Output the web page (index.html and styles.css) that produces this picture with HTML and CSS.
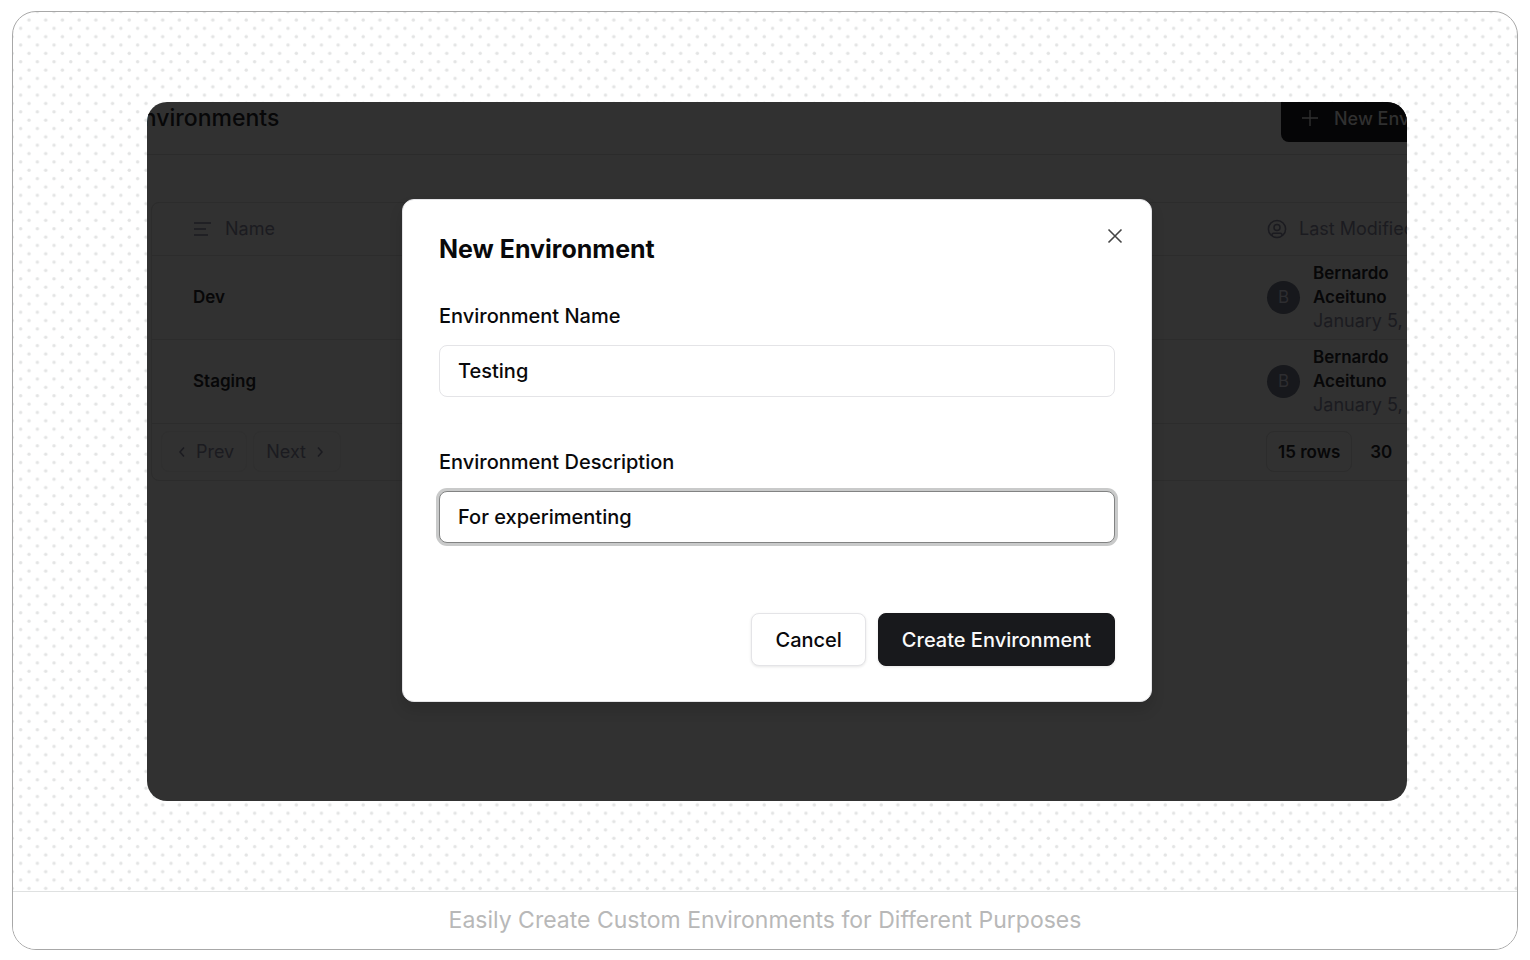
FILE: index.html
```html
<!DOCTYPE html>
<html lang="en">
<head>
<meta charset="utf-8">
<title>Environments</title>
<link rel="stylesheet" href="styles.css">
</head>
<body>
<figure class="frame">
  <div class="stage">
    <svg class="dots" aria-hidden="true">
      <defs>
        <pattern id="dot-grid" x="11.8" y="3.8" width="16.71" height="16.7" patternUnits="userSpaceOnUse">
          <circle cx="4.2" cy="4.2" r="1.7" fill="#e3e4e4"/>
          <circle cx="12.55" cy="12.55" r="1.7" fill="#e3e4e4"/>
        </pattern>
      </defs>
      <rect width="100%" height="100%" fill="url(#dot-grid)"/>
    </svg>
    <div class="shot">
      <main class="board">
        <header class="board-header">
          <h1 class="board-title">Environments</h1>
          <button class="new-button" type="button">
            <svg width="18" height="18" viewBox="0 0 18 18" fill="none" stroke="currentColor" stroke-width="1.4" aria-hidden="true"><path d="M9 1v16M1 9h16"/></svg>
            New Environment
          </button>
        </header>
        <section class="panel">
          <table class="table">
            <thead>
              <tr>
                <th class="col-name" scope="col"><span class="th-label">
                  <svg width="20" height="20" viewBox="0 0 20 20" fill="none" stroke="currentColor" stroke-width="1.6" aria-hidden="true"><path d="M1 4h17M1 10h12M1 16h14"/></svg>Name</span></th>
                <th class="col-user" scope="col"><span class="th-label">
                  <svg width="20" height="20" viewBox="0 0 20 20" fill="none" stroke="currentColor" stroke-width="1.5" aria-hidden="true"><circle cx="10" cy="10" r="8.6"/><circle cx="10" cy="8.5" r="3"/><path d="M5 17v-1.2a1.6 1.6 0 0 1 1.6-1.6h6.800a1.6 1.6 0 0 1 1.6 1.6V17"/></svg>Last Modified</span></th>
              </tr>
            </thead>
            <tbody>
              <tr>
                <td class="col-name">Dev</td>
                <td class="col-user"><div class="user"><span class="avatar">B</span><div class="who">Bernardo<br>Aceituno<br><span class="date">January 5, 2024</span></div></div></td>
              </tr>
              <tr>
                <td class="col-name">Staging</td>
                <td class="col-user"><div class="user"><span class="avatar">B</span><div class="who">Bernardo<br>Aceituno<br><span class="date">January 5, 2024</span></div></div></td>
              </tr>
            </tbody>
          </table>
          <div class="pager">
            <div class="pager-group">
              <button class="page-button" type="button"><svg width="8" height="12" viewBox="0 0 8 12" fill="none" stroke="currentColor" stroke-width="1.5" aria-hidden="true"><path d="M6 1.500 2 6l4 4.500"/></svg>Prev</button>
              <button class="page-button" type="button">Next<svg width="8" height="12" viewBox="0 0 8 12" fill="none" stroke="currentColor" stroke-width="1.5" aria-hidden="true"><path d="M2 1.500 6 6l-4 4.500"/></svg></button>
            </div>
            <div class="rows-group">
              <button class="rows-button rows-current" type="button">15 rows</button>
              <button class="rows-button" type="button">30</button>
            </div>
          </div>
        </section>
      </main>
      <div class="overlay">
        <form class="modal" role="dialog" aria-labelledby="modal-title">
          <h2 class="modal-title" id="modal-title">New Environment</h2>
          <button class="close" type="button" aria-label="Close"><svg width="16" height="16" viewBox="0 0 16 16" fill="none" stroke="currentColor" stroke-width="1.6" aria-hidden="true"><path d="m1.500 1.500 13 13m0-13-13 13"/></svg></button>
          <div class="field">
            <label for="env-name">Environment Name</label>
            <input class="input" id="env-name" type="text" value="Testing">
          </div>
          <div class="field">
            <label for="env-description">Environment Description</label>
            <input class="input input-active" id="env-description" type="text" value="For experimenting">
          </div>
          <div class="actions">
            <button class="button" type="button">Cancel</button>
            <button class="button button-primary" type="submit">Create Environment</button>
          </div>
        </form>
      </div>
    </div>
  </div>
  <figcaption class="caption">Easily Create Custom Environments for Different Purposes</figcaption>
</figure>
</body>
</html>
```

FILE: styles.css
```css
* { box-sizing: border-box; }

body {
  margin: 0;
  padding: 11px 12px 10px;
  background: #fff;
  color: #09090b;
  font-family: Inter, "Liberation Sans", sans-serif;
}

button, input { font: inherit; color: inherit; }

svg { flex: none; }

.frame {
  margin: 0;
  border: 1px solid #a8a8a8;
  border-radius: 24px;
  overflow: hidden;
}

.stage {
  position: relative;
  padding: 90px 110px 90px 134px;
  border-bottom: 1px solid #dfe1e1;
}

.dots {
  position: absolute;
  inset: 0;
  width: 100%;
  height: 100%;
}

.shot {
  position: relative;
  display: grid;
  overflow: hidden;
  border-radius: 20px;
  background: #313131;
}

.board, .overlay { grid-area: 1 / 1; min-width: 0; }

.board { color: #070708; }

.board-header {
  display: flex;
  align-items: center;
  justify-content: space-between;
  height: 73px;
  margin: -20px -84px 0 -18px;
  border-bottom: 1px solid #2b2b2b;
}

.board-title {
  margin: 0;
  font-size: 23px;
  font-weight: 500;
}

.new-button {
  display: flex;
  align-items: center;
  gap: 15px;
  height: 48px;
  width: 210px;
  padding: 0 20px;
  border: 0;
  border-radius: 8px;
  background: #050506;
  color: #303030;
  font-size: 18px;
  font-weight: 500;
  white-space: nowrap;
}

.panel {
  margin: 47px -21px 0 4px;
  border: 1px solid #2c2c2c;
  border-radius: 8px;
}

.table {
  width: 100%;
  table-layout: fixed;
  border-collapse: collapse;
  font-size: 17px;
  font-weight: 600;
  line-height: 24px;
  text-align: left;
}

.table tr { border-bottom: 1px solid #2c2c2c; }
.table th { height: 52px; padding: 0; font-size: 18px; font-weight: 400; color: #1b1b20; }
.table td { height: 84px; padding: 0; }
.table .col-name { padding-left: 41px; }
.table .col-user { width: 160px; white-space: nowrap; }

.th-label { display: flex; align-items: center; gap: 12px; }

.user { display: flex; align-items: center; gap: 13px; }

.avatar {
  display: grid;
  place-items: center;
  flex: none;
  width: 33px;
  height: 33px;
  border-radius: 50%;
  background: #17181c;
  color: #2d2d30;
  font-size: 17px;
  font-weight: 400;
}

.date { color: #1b1b20; font-size: 18px; font-weight: 400; }

.pager {
  display: flex;
  align-items: center;
  justify-content: space-between;
  height: 56px;
  padding: 0 0 0 9px;
}

.pager-group, .rows-group { display: flex; gap: 6px; }
.rows-group { width: 161px; gap: 0; }

.page-button, .rows-button {
  display: flex;
  align-items: center;
  height: 41px;
  border: 1px solid transparent;
  border-radius: 8px;
  background: none;
  font-size: 18px;
  white-space: nowrap;
}

.page-button {
  gap: 10px;
  padding: 0 12px 0 16px;
  border-color: #2f2f2f;
  color: #1b1b20;
}

.page-button:last-child { padding: 0 16px 0 12px; }

.rows-button { padding: 0 17px; font-size: 17px; font-weight: 600; }
.rows-current { padding: 0 11px; border-color: #2c2c2c; }

.overlay {
  position: relative;
  display: grid;
  place-items: center;
  padding: 97px 40px 99px;
}

.modal {
  position: relative;
  width: 100%;
  max-width: 750px;
  padding: 36px 36px 35px;
  border: 1px solid #e4e4e7;
  border-radius: 12px;
  background: #fff;
  box-shadow: 0 8px 14px rgba(0, 0, 0, 0.12);
  font-size: 20px;
  font-weight: 500;
}

.modal-title {
  margin: 0 0 42px;
  font-size: 25px;
  font-weight: 700;
  line-height: 26px;
}

.close {
  position: absolute;
  top: 20px;
  right: 20px;
  display: grid;
  place-items: center;
  width: 32px;
  height: 32px;
  padding: 0;
  border: 0;
  background: none;
  color: #454545;
}

.field {
  display: flex;
  flex-direction: column;
  gap: 17px;
  margin-bottom: 53px;
  line-height: 24px;
}

.input {
  width: 100%;
  height: 52px;
  padding: 0 18px;
  border: 1px solid #e4e4e7;
  border-radius: 8px;
  background: #fff;
  outline: none;
}

.input-active {
  border-color: #828383;
  box-shadow: 0 0 0 3px #c9caca;
}

.actions {
  display: flex;
  justify-content: flex-end;
  gap: 12px;
  margin-top: 70px;
}

.button {
  height: 53px;
  padding: 0 23px;
  border: 1px solid #e4e4e7;
  border-radius: 8px;
  background: #fff;
  box-shadow: 0 1px 3px rgba(0, 0, 0, 0.1);
}

.button-primary {
  border-color: #18181b;
  background: #18191c;
  color: #fafafa;
}

.caption {
  padding: 14px 20px 15px;
  color: #b8b8b8;
  background: #fff;
  font-size: 23px;
  line-height: 28px;
  text-align: center;
}
```
